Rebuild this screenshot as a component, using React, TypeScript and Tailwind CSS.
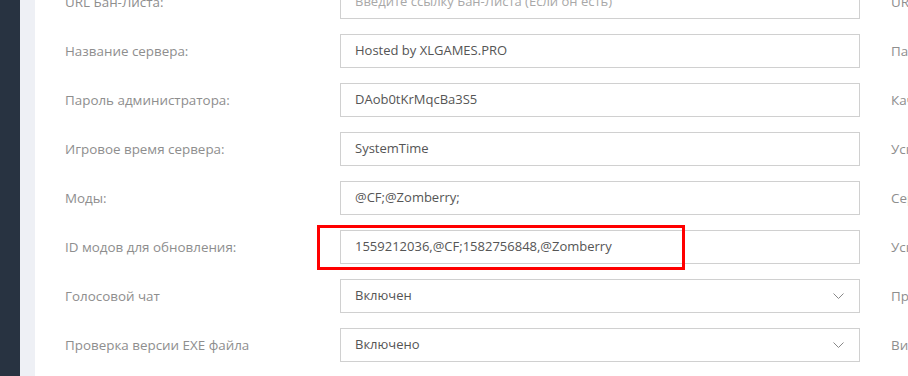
import React from "react";

type Row = {
  label: string;
  value: string;
  placeholder?: boolean;
  select?: boolean;
  right: string;
};

const rows: Row[] = [
  { label: "URL Бан-Листа:", value: "Введите ссылку Бан-Листа (Если он есть)", placeholder: true, right: "URL сайта сервера:" },
  { label: "Название сервера:", value: "Hosted by XLGAMES.PRO", right: "Пароль сервера:" },
  { label: "Пароль администратора:", value: "DAob0tKrMqcBa3S5", right: "Качество сети:" },
  { label: "Игровое время сервера:", value: "SystemTime", right: "Ускорение времени:" },
  { label: "Моды:", value: "@CF;@Zomberry;", right: "Серверные моды:" },
  { label: "ID модов для обновления:", value: "1559212036,@CF;1582756848,@Zomberry", right: "Ускорение ночи:" },
  { label: "Голосовой чат", value: "Включен", select: true, right: "Приватный сервер" },
  { label: "Проверка версии EXE файла", value: "Включено", select: true, right: "Вид от третьего лица" },
];

function Chevron() {
  return (
    <svg width="11" height="6" viewBox="0 0 11 6" className="shrink-0">
      <path d="M0.5 0.5 L5.5 5.5 L10.5 0.5" fill="none" stroke="#888" strokeWidth="1" />
    </svg>
  );
}

function Field({ row }: { row: Row }) {
  return (
    <div className="flex items-center h-[34px] w-[520px] shrink-0 border border-[#d0d0d0] bg-white pl-[14px] pr-[15px]">
      <span
        className={
          "flex-1 whitespace-nowrap text-[13px] " +
          (row.placeholder ? "text-[#a8a8a8]" : "text-[#555555]")
        }
      >
        {row.value}
      </span>
      {row.select && <Chevron />}
    </div>
  );
}

export default function App() {
  return (
    <div
      className="flex h-[376px] w-[908px] overflow-hidden bg-white"
      style={{ fontFamily: '"Open Sans", "Noto Sans", sans-serif' }}
    >
      <div className="w-[20px] shrink-0 bg-[#283341]" />
      <div className="w-[15px] shrink-0 bg-[#eef0f5]" />
      <div className="relative flex-1 overflow-hidden pl-[30px]">
        <div className="-mt-[15px] flex flex-col gap-[15px]">
          {rows.map((row) => (
            <div key={row.label} className="flex items-center">
              <div className="w-[275px] shrink-0 whitespace-nowrap text-[13.4px] text-[#8e8e8e]">
                {row.label}
              </div>
              <Field row={row} />
              <div className="ml-[31px] w-[275px] shrink-0 whitespace-nowrap text-[13.4px] text-[#8e8e8e]">
                {row.right}
              </div>
            </div>
          ))}
        </div>
        <div className="pointer-events-none absolute left-[282px] top-[225px] h-[45px] w-[368px] border-[3px] border-[#ff0000]" />
      </div>
    </div>
  );
}
